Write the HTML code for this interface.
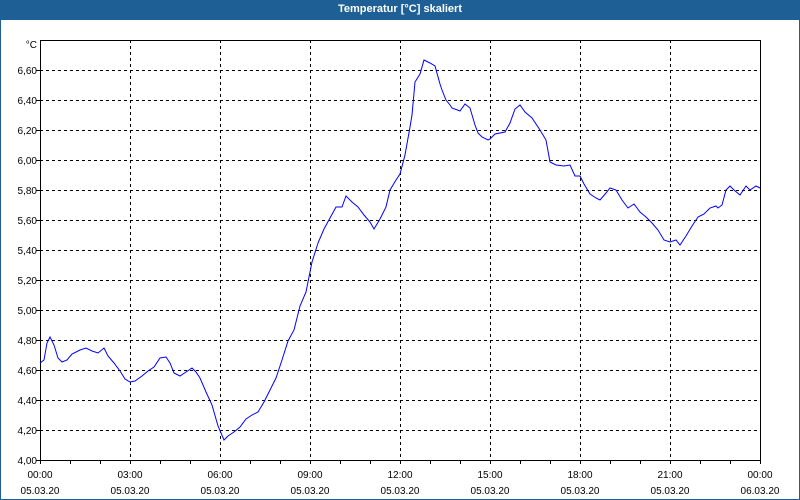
<!DOCTYPE html>
<html><head><style>
body{margin:0;width:800px;height:500px;overflow:hidden;background:#fff;font-family:"Liberation Sans",sans-serif}
.t{position:absolute;left:0;top:0;width:800px;height:20px;background:#1e5f96;color:#fff;font-size:11px;font-weight:bold;text-align:center;line-height:18px}
.f{position:absolute;left:0;top:20px;width:798px;height:479px;border:1px solid #1e5f96;border-top:none}
svg{position:absolute;left:0;top:0}
text{font-family:"Liberation Sans",sans-serif;font-size:10px;fill:#000}
</style></head><body>
<div class="t">Temperatur [°C] skaliert</div>
<div class="f"></div>
<svg width="800" height="500">
<g stroke="#000" stroke-dasharray="3,3" stroke-width="1">
<path d="M40 70.5H760M40 100.5H760M40 130.5H760M40 160.5H760M40 190.5H760M40 220.5H760M40 250.5H760M40 280.5H760M40 310.5H760M40 340.5H760M40 370.5H760M40 400.5H760M40 430.5H760"/>
<path d="M130.5 40V460M220.5 40V460M310.5 40V460M400.5 40V460M490.5 40V460M580.5 40V460M670.5 40V460"/>
</g>
<rect x="40.5" y="40.5" width="720" height="420" fill="none" stroke="#000"/>
<g stroke="#000"><path d="M40.5 460V464M70.5 460V464M100.5 460V464M130.5 460V464M160.5 460V464M190.5 460V464M220.5 460V464M250.5 460V464M280.5 460V464M310.5 460V464M340.5 460V464M370.5 460V464M400.5 460V464M430.5 460V464M460.5 460V464M490.5 460V464M520.5 460V464M550.5 460V464M580.5 460V464M610.5 460V464M640.5 460V464M670.5 460V464M700.5 460V464M730.5 460V464M760.5 460V464M36 70.5H40M36 100.5H40M36 130.5H40M36 160.5H40M36 190.5H40M36 220.5H40M36 250.5H40M36 280.5H40M36 310.5H40M36 340.5H40M36 370.5H40M36 400.5H40M36 430.5H40M36 460.5H40"/></g>
<g text-anchor="end">
<text x="37" y="48">°C</text>
<text x="37" y="74">6,60</text><text x="37" y="104">6,40</text><text x="37" y="134">6,20</text><text x="37" y="164">6,00</text><text x="37" y="194">5,80</text><text x="37" y="224">5,60</text><text x="37" y="254">5,40</text><text x="37" y="284">5,20</text><text x="37" y="314">5,00</text><text x="37" y="344">4,80</text><text x="37" y="374">4,60</text><text x="37" y="404">4,40</text><text x="37" y="434">4,20</text><text x="37" y="464">4,00</text>
</g>
<g text-anchor="middle">
<text x="40" y="478">00:00</text><text x="40" y="494">05.03.20</text>
<text x="130" y="478">03:00</text><text x="130" y="494">05.03.20</text>
<text x="220" y="478">06:00</text><text x="220" y="494">05.03.20</text>
<text x="310" y="478">09:00</text><text x="310" y="494">05.03.20</text>
<text x="400" y="478">12:00</text><text x="400" y="494">05.03.20</text>
<text x="490" y="478">15:00</text><text x="490" y="494">05.03.20</text>
<text x="580" y="478">18:00</text><text x="580" y="494">05.03.20</text>
<text x="670" y="478">21:00</text><text x="670" y="494">05.03.20</text>
<text x="760" y="478">00:00</text><text x="760" y="494">06.03.20</text>
</g>
<polyline fill="none" stroke="#0000ff" stroke-width="1" points="40,363 44,360 47,343 50,337 54,345 58,358 62,362 67,360 72,354 80,350 86,348 92,351 98,353 104,348 108,356 114,363 120,371 125,379 130,382 135,381 142,376 148,371 154,367 160,358 166,357 170,363 174,373 180,376 186,372 192,368 196,372 200,378 206,392 212,405 218,426 224,440 228,436 234,432 240,427 246,419 252,415 258,412 264,402 270,390 276,378 282,360 288,341 294,330 300,306 306,292 312,262 318,243 324,229 330,218 336,207 342,207 346,196 352,202 358,207 364,215 370,222 374,229 380,219 386,207 390,190 396,180 400,174 405,155 410,127 412,115 415,82 420,74 424,60 430,63 435,66 440,84 442,90 446,100 450,105 452,108 460,111 465,104 470,108 475,125 478,133 482,137 488,140 490,139 495,134 505,132 510,123 515,109 520,105 525,112 532,118 540,130 546,140 550,162 556,165 564,166 570,165 575,176 580,176 584,184 590,194 596,198 600,200 606,193 610,188 616,190 622,200 628,208 634,204 640,212 646,217 652,223 658,230 664,240 670,242 676,240 680,245 686,236 692,226 698,217 704,214 710,208 716,206 718,208 722,205 726,190 730,186 734,190 740,195 746,186 750,190 756,186 760,188"/>
</svg>
</body></html>
